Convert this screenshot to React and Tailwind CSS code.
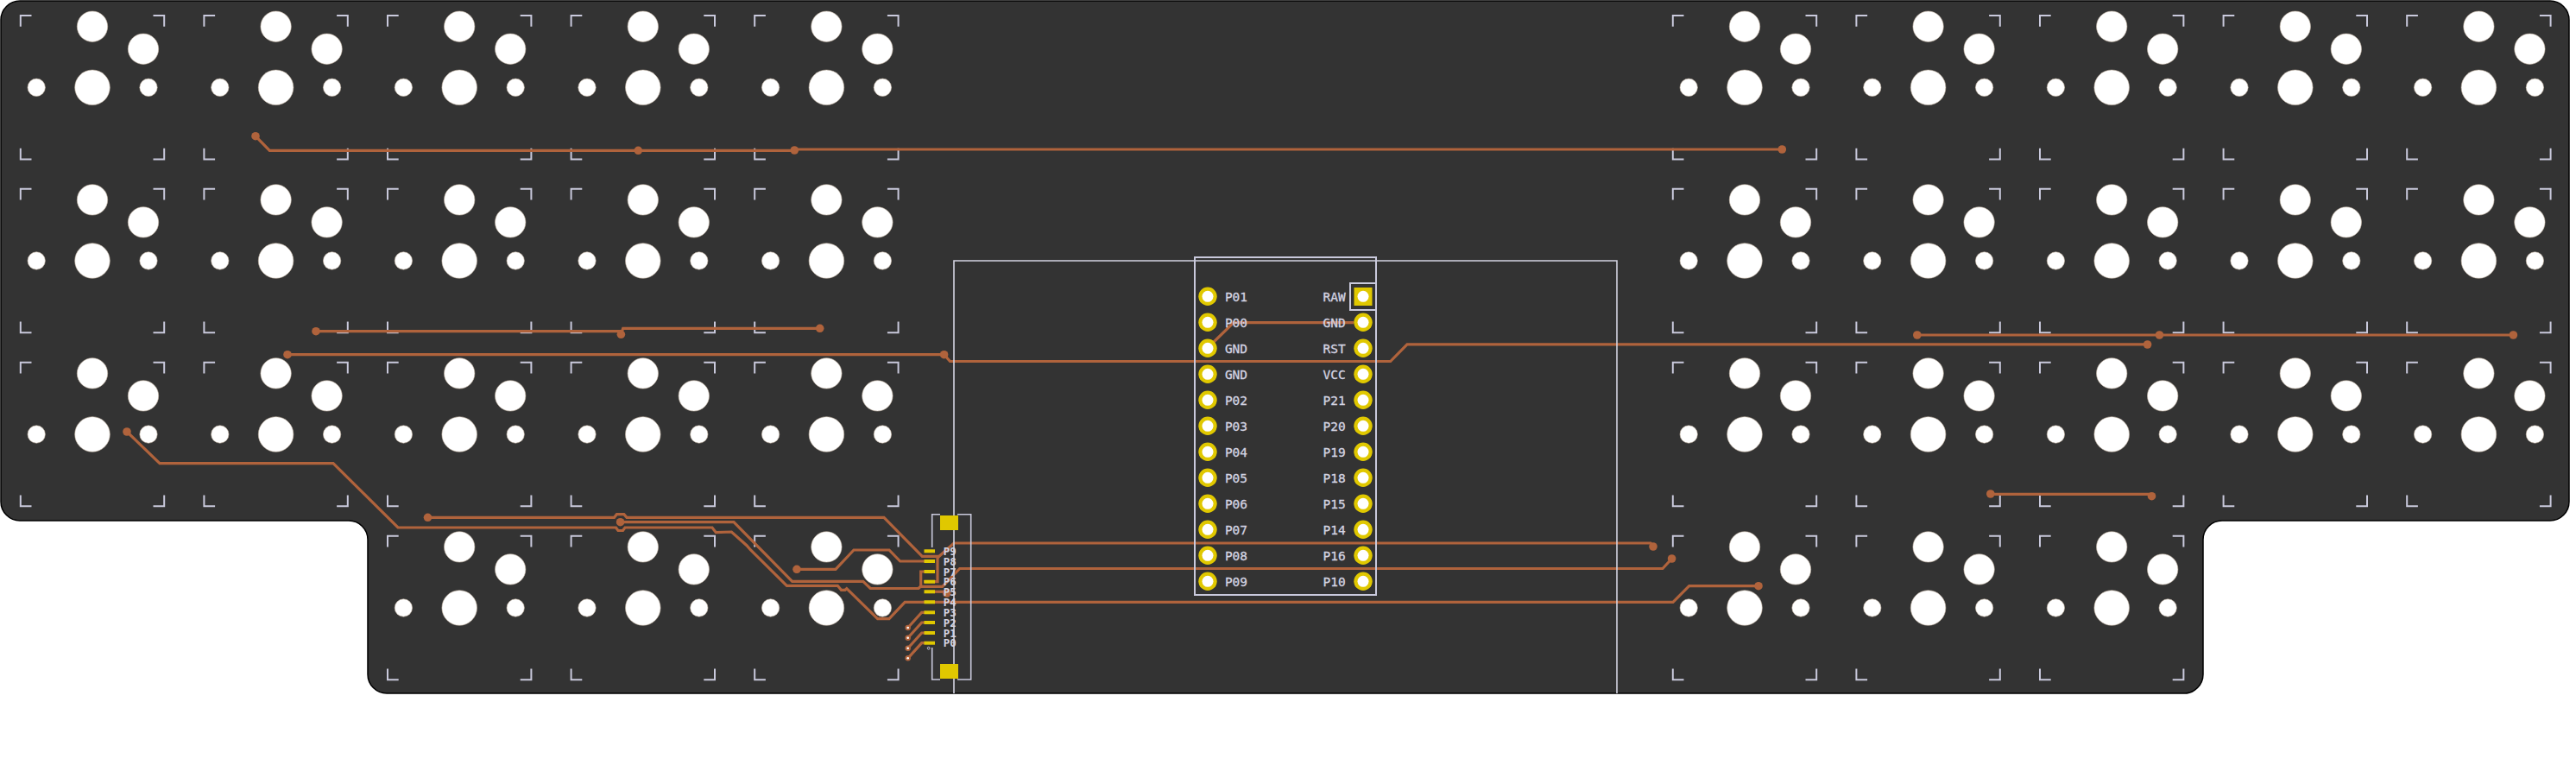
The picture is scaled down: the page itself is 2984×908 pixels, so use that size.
import React from "react";

const PITCH = 212.6;
const leftCols = [0, 1, 2, 3, 4].map((i) => 107 + i * PITCH);
const rightCols = [0, 1, 2, 3, 4].map((i) => 2021 + i * PITCH);
const rowY = [101.3, 302, 503, 704];

const switches = [
  ...rowY.slice(0, 3).flatMap((y) => [...leftCols, ...rightCols].map((x) => [x, y])),
  ...[leftCols[2], leftCols[3], leftCols[4], rightCols[0], rightCols[1], rightCols[2]].map((x) => [x, rowY[3]]),
];

const leftPins = ["P01", "P00", "GND", "GND", "P02", "P03", "P04", "P05", "P06", "P07", "P08", "P09"];
const rightPins = ["RAW", "GND", "RST", "VCC", "P21", "P20", "P19", "P18", "P15", "P14", "P16", "P10"];
const fpcPads = [638.3, 650, 662, 673.7, 685.3, 697.3, 709.3, 721, 733, 744.7];
const fpcLabels = ["P9", "P8", "P7", "P6", "P5", "P4", "P3", "P2", "P1", "P0"];

const traces = [
  "M296,157.7 L312.3,174.3 L920,174.3",
  "M920,173 L2064,173",
  "M366,383.7 L719.4,383.7 L719.4,387",
  "M719.4,387 L721.7,380.3 L949.7,380.3",
  "M333,410.7 L1093.6,410.7 L1100.5,418.5 L1610.7,418.5 L1630,398.8 L2487.6,398.8",
  "M2220.8,388 L2911.4,388",
  "M2305.8,572.3 L2490,572.3 L2492.5,574.7",
  // column wires into the connector
  "M495.5,599.3 L711.5,599.3 L714.4,595.7 L722.8,595.7 L726,599.3 L1024,599.3 L1068.3,644.3 L1086,644.3 L1086,673.7 L1070,673.7",
  "M1086,646 L1105,629 L1912,629 L1915,633",
  "M923,659.3 L968,659.3 L989,637 L1030,637 L1042.7,650 L1072,650",
  "M718.6,604.7 L850,604.7 L917.7,673.3 L999.8,673.3 L1008.2,681.5 L1064,681.5 L1066.7,679 L1066.7,662 L1072,662",
  "M1066.7,679.3 L1091.7,679.3 L1111.7,658.5 L1926,658.5 L1936.6,647",
  "M147,500 L185,536.6 L386,536.6 L461,611 L713.5,611 L716,614.5 L721.5,614.5 L724,611 L825,611 L829.3,616.7 L847.4,616 L865,631.7 L869.3,636.7 L911.4,678.3 L970.3,678.3 L974.5,683.3 L979,683.3 L980.8,681.7 L1016.6,716.7 L1030,716.7 L1048.2,697.3 L1938,697.3 L1956.7,678.7 L2037,678.7",
  "M1072,685.3 L1096,685.3",
  "M1051.7,727 L1067.7,709.3 L1072,709.3",
  "M1051.7,738.7 L1067.7,721 L1072,721",
  "M1051.7,750.7 L1067.7,733 L1072,733",
  "M1051.7,762.3 L1067.7,744.7 L1072,744.7",
  "M1406,396 L1429,373.7 L1568,373.7",
  "M1072,638.3 L1080,638.3",
];

const dots = [
  [296, 157.7], [739.3, 174.3], [920.3, 174], [2064.3, 173], [366, 383.7], [719.4, 387.3], [949.7, 380.3],
  [333, 410.7], [1093.6, 410.7], [2487.6, 399], [2220.8, 388], [2501.5, 388], [2911.4, 388],
  [2305.8, 572], [2492.5, 574.7], [147, 500], [495.5, 599.3], [718.6, 604.7], [923, 659.3],
  [1915, 633], [1936.6, 647], [2037, 678.7], [1096.7, 687],
];

const vias = [727, 738.7, 750.7, 762.3];

function Switch({ x, y }) {
  const s = 83.2;
  const l = 12.7;
  return (
    <g>
      <g className="fill-white stroke-[#c8b8a8] [stroke-width:0.6]">
        <circle cx={x} cy={y - 70.6} r="17.7" />
        <circle cx={x + 59} cy={y - 44.6} r="17.7" />
        <circle cx={x} cy={y} r="20.3" />
        <circle cx={x - 64.8} cy={y} r="10.2" />
        <circle cx={x + 65} cy={y} r="10.2" />
      </g>
      <path
        className="fill-none stroke-[#c9c9dc] [stroke-width:2]"
        d={`M${x - s},${y - s + l} V${y - s} H${x - s + l} M${x + s - l},${y - s} H${x + s} V${y - s + l} M${x - s},${y + s - l} V${y + s} H${x - s + l} M${x + s - l},${y + s} H${x + s} V${y + s - l}`}
      />
    </g>
  );
}

export default function App() {
  return (
    <div className="w-[2984px] h-[908px] bg-white overflow-hidden">
      <svg width="2984" height="908" viewBox="0 0 2984 908" className="block">
        {/* board outline */}
        <path
          className="fill-[#333333] stroke-black [stroke-width:1.5]"
          d="M23,1 H2954 A22,22 0 0 1 2976,23 V581 A22,22 0 0 1 2954,603 H2574 A22,22 0 0 0 2552,625 V781 A22,22 0 0 1 2530,803 H448 A22,22 0 0 1 426,781 V625 A22,22 0 0 0 404,603 H23 A22,22 0 0 1 1,581 V23 A22,22 0 0 1 23,1 Z"
        />

        {switches.map(([x, y]) => (
          <Switch key={`${x}-${y}`} x={x} y={y} />
        ))}

        {/* copper */}
        <g className="fill-none stroke-[#b0633c] [stroke-width:3.2]">
          {traces.map((d) => (
            <path key={d} d={d} />
          ))}
        </g>
        <g className="fill-[#b0633c]">
          {dots.map(([x, y]) => (
            <circle key={`${x}-${y}`} cx={x} cy={y} r="4.8" />
          ))}
        </g>
        {vias.map((y) => (
          <g key={y}>
            <circle cx="1051.7" cy={y} r="3.2" className="fill-[#b0633c]" />
            <circle cx="1051.7" cy={y} r="1.3" className="fill-white" />
          </g>
        ))}

        {/* controller + case outlines */}
        <path className="fill-none stroke-[#d4d4e2] [stroke-width:1.6]" d="M1105,803 V302 H1873 V803" />
        <rect x="1384" y="298" width="210" height="391" className="fill-none stroke-[#c9c9dc] [stroke-width:2]" />
        <rect x="1564" y="328" width="30" height="31" className="fill-none stroke-[#c9c9dc] [stroke-width:2]" />

        {/* connector silk */}
        <path
          className="fill-none stroke-[#c9c9dc] [stroke-width:1.6]"
          d="M1089,595.7 H1079.7 V634 M1079.7,750 V787 H1089 M1109,595.7 H1124.7 V787 H1109"
        />
        <circle cx="1075.7" cy="750.7" r="1.4" className="fill-none stroke-[#c9c9dc] [stroke-width:1]" />

        {/* connector pads */}
        <g className="fill-[#e0c800]">
          <rect x="1089" y="597" width="21" height="17" />
          <rect x="1089" y="769" width="21" height="17" />
          {fpcPads.map((y) => (
            <rect key={y} x="1070.5" y={y - 2} width="12.5" height="4" />
          ))}
        </g>
        <g className="fill-[#d4d4e2] font-['DejaVu_Sans_Mono',monospace] text-[12.5px] font-bold">
          {fpcLabels.map((t, i) => (
            <text key={t} x="1092.7" y={fpcPads[i] + 4.6}>
              {t}
            </text>
          ))}
        </g>

        {/* controller pins */}
        {leftPins.map((t, i) => (
          <g key={`l${i}`}>
            <circle cx="1399" cy={343.3 + i * 30} r="10.7" className="fill-[#e0c800]" />
            <circle cx="1399" cy={343.3 + i * 30} r="6.5" className="fill-white" />
            <text
              x="1432"
              y={343.3 + i * 30 + 5.3}
              textAnchor="middle"
              className="fill-[#d4d4e2] stroke-[#d4d4e2] [stroke-width:0.3] font-['DejaVu_Sans_Mono',monospace] text-[14.5px]"
            >
              {t}
            </text>
          </g>
        ))}
        {rightPins.map((t, i) => (
          <g key={`r${i}`}>
            {i === 0 ? (
              <rect x="1568.5" y="333" width="21" height="21" className="fill-[#e0c800]" />
            ) : (
              <circle cx="1579" cy={343.3 + i * 30} r="10.7" className="fill-[#e0c800]" />
            )}
            <circle cx="1579" cy={343.3 + i * 30} r="6.5" className="fill-white" />
            <text
              x="1545.7"
              y={343.3 + i * 30 + 5.3}
              textAnchor="middle"
              className="fill-[#d4d4e2] stroke-[#d4d4e2] [stroke-width:0.3] font-['DejaVu_Sans_Mono',monospace] text-[14.5px]"
            >
              {t}
            </text>
          </g>
        ))}
      </svg>
    </div>
  );
}
